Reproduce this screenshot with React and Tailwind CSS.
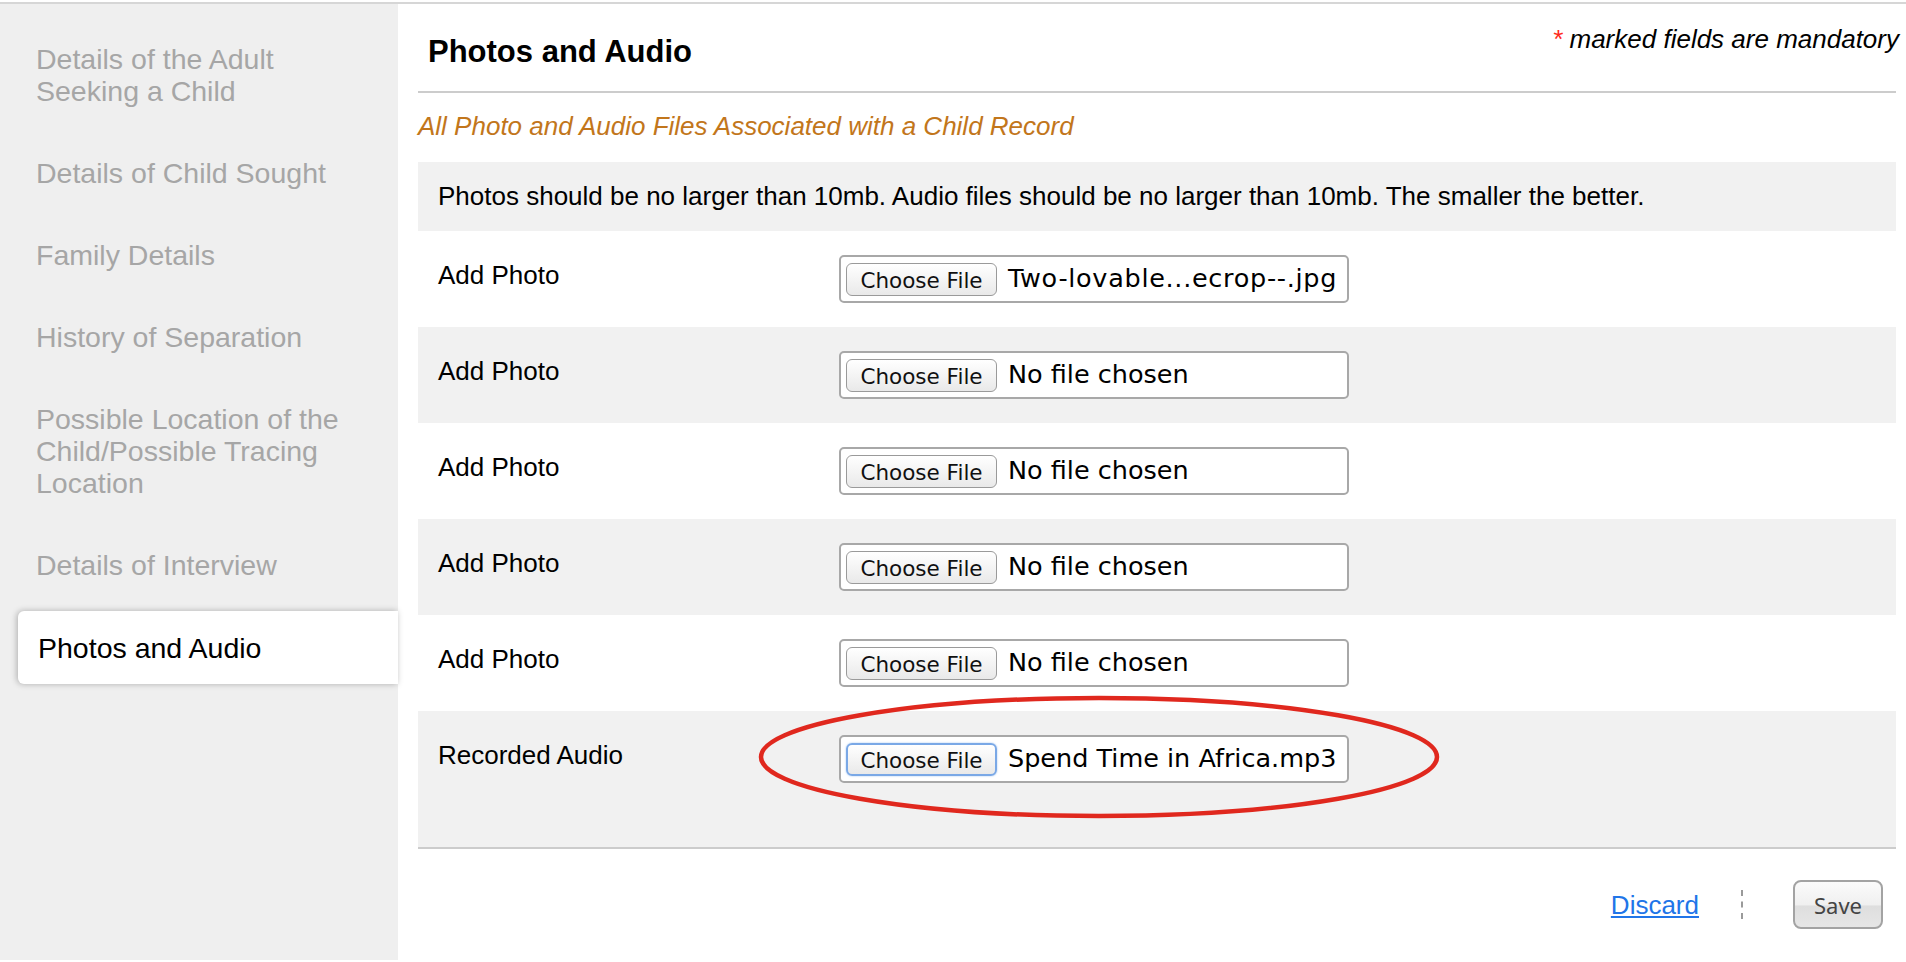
import React from "react";

const NAV = [
  "Details of the Adult Seeking a Child",
  "Details of Child Sought",
  "Family Details",
  "History of Separation",
  "Possible Location of the Child/Possible Tracing Location",
  "Details of Interview",
];

const ROWS = [
  { label: "Add Photo", file: "Two-lovable...ecrop--.jpg", wide: true },
  { label: "Add Photo", file: "No file chosen" },
  { label: "Add Photo", file: "No file chosen" },
  { label: "Add Photo", file: "No file chosen" },
  { label: "Add Photo", file: "No file chosen" },
];

function FileField({ name, focused, wide }) {
  return (
    <div className="flex h-[48px] w-[510px] items-center rounded-[5px] border-2 border-[#a8a8a8] bg-white pl-[5px]">
      <div
        className={
          focused
            ? "flex h-[33px] w-[151px] items-center justify-center rounded-[6px] border-2 border-[#7aa8e6] bg-[linear-gradient(to_bottom,#ffffff,#e9e9e9)] pt-[4px] font-['DejaVu_Sans',sans-serif] text-[21.5px] leading-none text-[#111] shadow-[0_0_2px_#9cc0ef]"
            : "flex h-[33px] w-[151px] items-center justify-center rounded-[6px] border border-[#9a9a9a] bg-[linear-gradient(to_bottom,#ffffff,#e9e9e9)] pt-[4px] font-['DejaVu_Sans',sans-serif] text-[21.5px] leading-none text-[#111]"
        }
      >
        Choose File
      </div>
      <span
        className={
          wide
            ? "ml-[11px] font-['DejaVu_Sans',sans-serif] text-[25.5px] leading-none tracking-[0.7px] text-black"
            : "ml-[11px] font-['DejaVu_Sans',sans-serif] text-[25.5px] leading-none text-black"
        }
      >
        {name}
      </span>
    </div>
  );
}

export default function App() {
  return (
    <div className="min-h-screen bg-white pt-[2px] font-['Liberation_Sans',Arial,sans-serif]">
      <div className="flex min-h-[958px] border-t-2 border-[#d6d6d6]">
        {/* sidebar */}
        <div className="w-[398px] shrink-0 bg-[#efefef] pt-[14px]">
          {NAV.map((item) => (
            <div
              key={item}
              className="py-[25px] pl-[36px] pr-[42px] text-[28.5px] leading-[32px] text-[#a6a6a6]"
            >
              {item}
            </div>
          ))}
          <div className="ml-[18px] mt-[5px] rounded-l-[6px] bg-white pb-[20px] pl-[20px] pt-[21px] text-[28.5px] leading-[32px] text-black shadow-[-1px_0_6px_rgba(0,0,0,0.28)]">
            Photos and Audio
          </div>
        </div>

        {/* content */}
        <div className="flex-1 pl-[20px] pr-[10px]">
          <div className="flex items-start justify-between border-b-2 border-[#cccccc]">
            <h1 className="pb-[21px] pl-[10px] pt-[30px] text-[31px] font-bold leading-[36px] text-black">
              Photos and Audio
            </h1>
            <p className="-mr-[3px] pt-[20px] text-[26px] italic leading-[30px] text-black">
              <span className="text-[#ff2a1a]">*</span> marked fields are mandatory
            </p>
          </div>

          <p className="mt-[18px] text-[26px] italic leading-[30px] text-[#c2761b]">
            All Photo and Audio Files Associated with a Child Record
          </p>

          <div className="mt-[21px] bg-[#f1f1f1] pb-[20px] pl-[20px] pt-[19px] text-[26px] leading-[30px] text-black">
            Photos should be no larger than 10mb. Audio files should be no larger than 10mb. The smaller the better.
          </div>

          {ROWS.map((row, i) => (
            <div
              key={i}
              className={
                i % 2 === 0
                  ? "flex items-start bg-white py-[24px] pl-[20px]"
                  : "flex items-start bg-[#f1f1f1] py-[24px] pl-[20px]"
              }
            >
              <div className="w-[401px] pt-[5px] text-[26px] leading-[30px] text-black">
                {row.label}
              </div>
              <FileField name={row.file} wide={row.wide} />
            </div>
          ))}

          <div className="relative flex items-start border-b-2 border-[#cccccc] bg-[#f1f1f1] pb-[64px] pl-[20px] pt-[24px]">
            <div className="w-[401px] pt-[5px] text-[26px] leading-[30px] text-black">
              Recorded Audio
            </div>
            <FileField name="Spend Time in Africa.mp3" focused />
            <svg
              className="pointer-events-none absolute left-[340px] top-[-16px]"
              width="682"
              height="124"
              viewBox="0 0 682 124"
            >
              <ellipse
                cx="341"
                cy="62"
                rx="338"
                ry="59"
                fill="none"
                stroke="#e0281e"
                strokeWidth="4.5"
              />
            </svg>
          </div>

          <div className="flex items-center justify-end pr-[13px] pt-[31px]">
            <a href="#" className="text-[26px] leading-[30px] text-[#2175e8] underline">
              Discard
            </a>
            <div className="ml-[42px] h-[29px] border-l-2 border-dashed border-[#9a9a9a]" />
            <button className="ml-[50px] flex h-[49px] w-[90px] items-center justify-center rounded-[8px] border-2 border-[#a3a3a3] bg-[linear-gradient(to_bottom,#fbfbfb_0%,#f0f0f0_50%,#dedede_54%,#e6e6e6_100%)] pt-[2px] font-['Noto_Sans',sans-serif] text-[22px] text-[#444]">
              Save
            </button>
          </div>
        </div>
      </div>
    </div>
  );
}
